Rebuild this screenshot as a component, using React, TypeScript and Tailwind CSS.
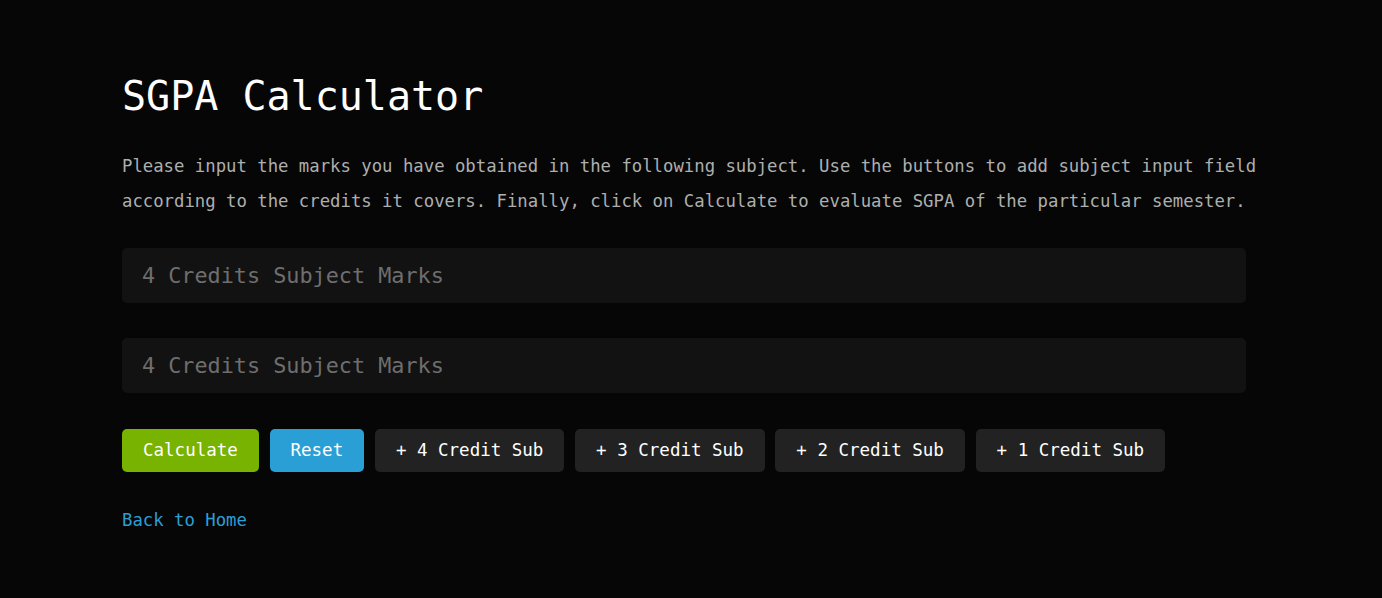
import { useState } from 'react';

type Row = { id: number; credits: number };

const mono = "font-['DejaVu_Sans_Mono','Liberation_Mono',monospace]";

export default function App() {
  const [rows, setRows] = useState<Row[]>([
    { id: 1, credits: 4 },
    { id: 2, credits: 4 },
  ]);

  const addRow = (credits: number) =>
    setRows((r) => [...r, { id: Date.now(), credits }]);

  return (
    <main className={`min-h-screen bg-[#060606] pl-[122px] pt-[72px] pb-16 ${mono}`}>
      <div className="max-w-[1150px]">
        <h1 className="text-[40px] leading-[48px] text-white">SGPA Calculator</h1>
        <p className="mt-[29px] text-[17.3px] leading-[35px] text-[#adafae]">
          Please input the marks you have obtained in the following subject. Use the buttons to add subject input field
          according to the credits it covers. Finally, click on Calculate to evaluate SGPA of the particular semester.
        </p>

        {/* Subject inputs */}
        <div className="mt-[29px] flex flex-col gap-[35px]">
          {rows.map((row) => (
            <input
              key={row.id}
              type="number"
              placeholder={`${row.credits} Credits Subject Marks`}
              className="h-[55px] w-[1124px] rounded-[5px] bg-[#121212] px-5 text-[21.8px] text-white placeholder:text-[#6e6e6e] focus:outline-none"
            />
          ))}
        </div>

        {/* Actions */}
        <div className="mt-[36px] flex gap-[10.7px] text-[17.5px] text-white">
          <button className="h-[43px] rounded-[5px] bg-[#77b300] px-[21px]">Calculate</button>
          <button className="h-[43px] rounded-[5px] bg-[#2a9fd6] px-[21px]">Reset</button>
          {[4, 3, 2, 1].map((c) => (
            <button
              key={c}
              onClick={() => addRow(c)}
              className="h-[43px] rounded-[5px] bg-[#222222] px-[21px]"
            >
              + {c} Credit Sub
            </button>
          ))}
        </div>

        <a href="#" className="mt-[36px] block text-[17.3px] leading-[24px] text-[#2a9fd6]">
          Back to Home
        </a>
      </div>
    </main>
  );
}
